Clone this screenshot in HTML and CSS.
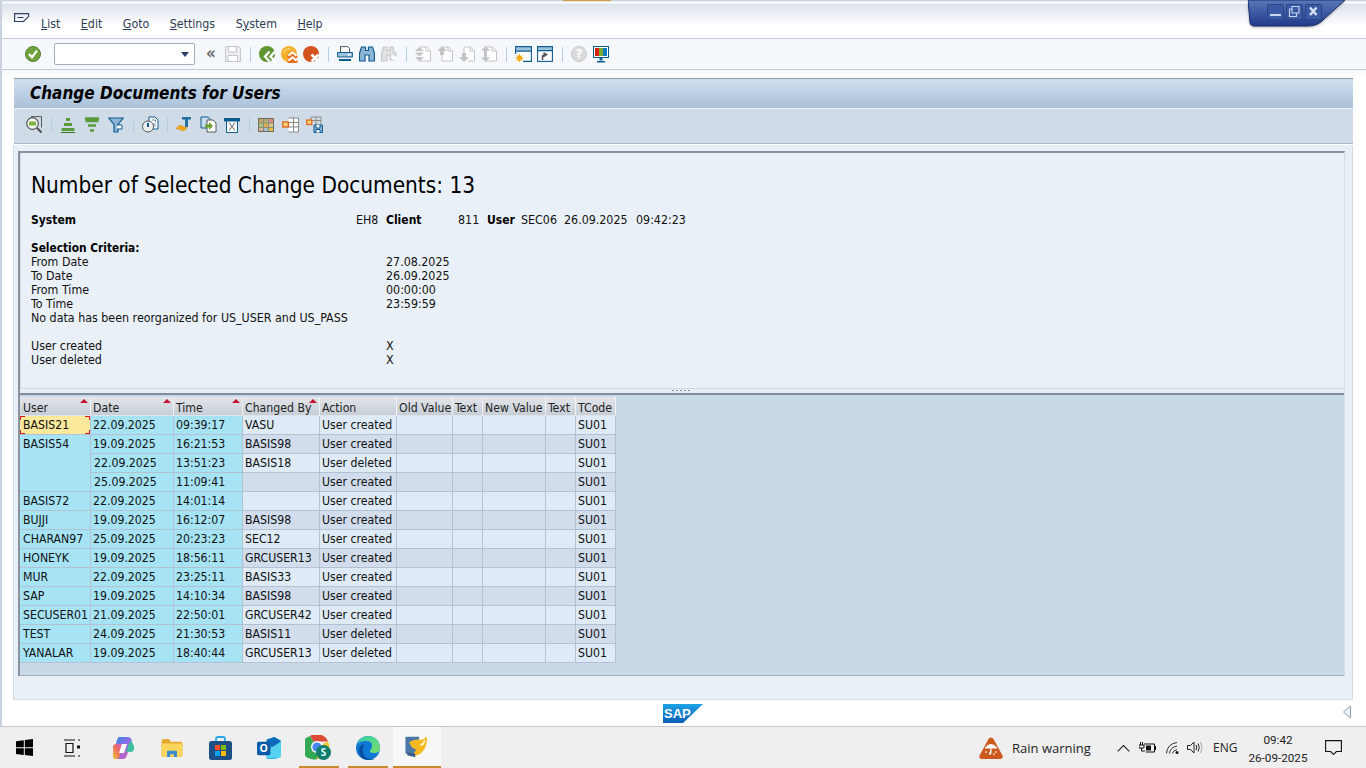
FILE: index.html
```html
<!DOCTYPE html>
<html lang="en">
<head>
  <meta charset="UTF-8">
  <meta name="viewport" content="width=device-width,initial-scale=1.0">
  <title>Change Documents for Users</title>
  <link rel="stylesheet" href="styles.css">
</head>
<body>
  <div class="window">
    <span class="top-accent"></span>

    <!-- window buttons hanging from the top edge -->
    <div class="win-controls">
      <svg width="100" height="28" viewBox="0 0 100 28">
        <defs>
          <linearGradient id="wcBg" x1="0" y1="0" x2="0" y2="1">
            <stop offset="0" stop-color="#5878ba"/>
            <stop offset="1" stop-color="#22398a"/>
          </linearGradient>
        </defs>
        <path d="M0 0 L2 22 Q2 26 7 26 L60 26 Q70 26 76 19 L97 0 Z" fill="url(#wcBg)" stroke="#1b2f6b"/>
        <rect x="19.5" y="4.5" width="16" height="15" rx="1.5" fill="#3a5aa6" stroke="#2a4583"/>
        <rect x="38.5" y="4.5" width="16" height="15" rx="1.5" fill="#3a5aa6" stroke="#2a4583"/>
        <rect x="57.5" y="4.5" width="16" height="15" rx="1.5" fill="#3a5aa6" stroke="#2a4583"/>
        <rect x="22" y="14" width="11" height="2" fill="#c9d6ee"/>
        <path d="M44 9h-2.500v7.500h7V13M44 6.500h7v6.500h-7z" fill="none" stroke="#c9d6ee" stroke-width="1.1"/>
        <path d="M62 7.500l6.500 7.500M68.500 7.500L62 15" stroke="#d9e3f4" stroke-width="2.4"/>
      </svg>
    </div>

    <header class="menubar">
      <svg class="menu-icon" width="16" height="12" viewBox="0 0 16 12"><path d="M.6.6h14v3L9.500 8.500H.6zM3.500 4.500h6" fill="none" stroke="#2e4266" stroke-width="1.2"/></svg>
      <nav class="menu">
        <a href="#"><u>L</u>ist</a>
        <a href="#"><u>E</u>dit</a>
        <a href="#"><u>G</u>oto</a>
        <a href="#"><u>S</u>ettings</a>
        <a href="#">S<u>y</u>stem</a>
        <a href="#"><u>H</u>elp</a>
      </nav>
    </header>

    <div class="sys-toolbar">
      <span class="tb"><svg width="16" height="16" viewBox="0 0 16 16"><circle cx="8" cy="8" r="7.5" fill="#6fa43c" stroke="#55802d"/><path d="M4 8l3 3.200L12 4.600" fill="none" stroke="#fff" stroke-width="2.2"/></svg></span>
      <div class="cmd-box"><span class="cmd-arrow"></span></div>
      <span class="tb tb-chev">«</span>
      <span class="tb"><svg width="16" height="16" viewBox="0 0 16 16"><path d="M.5.5h13l2 2v13H.5z" fill="#eceef0" stroke="#c3c6ca"/><path d="M3.500 1v5h8V1M3 15v-5.500h9.500V15" fill="#fff" stroke="#c3c6ca"/></svg></span>
      <span class="sep"></span>
      <span class="tb"><svg width="17" height="17" viewBox="0 0 17 17"><circle cx="8" cy="8" r="8" fill="#5f9732"/><path d="M10.500 5.500L6 10.500l4.500 5M16 5.500l-4.500 5 4.500 5" fill="none" stroke="#fff" stroke-width="2.3"/></svg></span>
      <span class="tb"><svg width="17" height="17" viewBox="0 0 17 17"><circle cx="8" cy="8" r="8" fill="#f4b02a"/><path d="M3 8a5.500 5.500 0 0 1 7-5" fill="none" stroke="#fbd46a" stroke-width="1.5"/><path d="M6.500 9.500l5-4.500 5 4.500v2.500h-10zM6.500 14.500l5-4.500 5 4.500V17h-10z" fill="#e8701f"/><path d="M7.500 9.800l4-3.500 4 3.500M7.500 14.800l4-3.500 4 3.500" fill="none" stroke="#fff" stroke-width="1.8"/></svg></span>
      <span class="tb"><svg width="17" height="17" viewBox="0 0 17 17"><circle cx="8" cy="8" r="8" fill="#d4531f"/><path d="M8.500 8.500l7 7M15.500 8.500l-7 7" stroke="#fff" stroke-width="2.6"/></svg></span>
      <span class="sep"></span>
      <span class="tb"><svg width="16" height="16" viewBox="0 0 16 16"><path d="M3.500 6V.6h7l2 2V6" fill="#fff" stroke="#4a5561"/><path d="M.6 6.500h14.800v4.500H.6z" fill="#9ec3de" stroke="#0f5b8e"/><rect x="11" y="7.8" width="2.5" height="1.8" fill="#fff"/><path d="M2 13h12v2H2z" fill="#0f5b8e"/></svg></span>
      <span class="tb"><svg width="16" height="16" viewBox="0 0 16 16"><path d="M2.500 1h4v3.500h3V1h4l2 6.500V15h-5.500V9H6v6H.5V7.500z" fill="#8db6d6" stroke="#0f5b8e" stroke-width="1.2"/></svg></span>
      <span class="tb"><svg width="16" height="16" viewBox="0 0 16 16"><path d="M2.500 1h3.500v3.500h3V1h3l1 6H15v3h-2.500v4H9V9H6v6H.5V7.500z" fill="#e2e2e2" stroke="#c6c6c6" stroke-width="1.2"/><path d="M10 11.500h5M12.500 9v5" stroke="#fff" stroke-width="2"/></svg></span>
      <span class="sep"></span>
      <span class="tb"><svg width="16" height="16" viewBox="0 0 16 16"><path d="M4.500 1h7l4 4v10h-11" fill="#fff" stroke="#c4c4c4"/><path d="M11 1v4h4" fill="none" stroke="#c4c4c4"/><path d="M4.500 1L0 5h9zM0 6.500h9L4.500 10.500zM0 11h9l-4.500 4.500z" fill="#c4c4c4"/></svg></span>
      <span class="tb"><svg width="16" height="16" viewBox="0 0 16 16"><path d="M6 1h5.500l4 4v10H5V9" fill="#fff" stroke="#c4c4c4"/><path d="M11 1v4h4" fill="none" stroke="#c4c4c4"/><path d="M5 0L0 5h3v4h4V5h3z" fill="#c4c4c4"/></svg></span>
      <span class="tb"><svg width="16" height="16" viewBox="0 0 16 16"><path d="M5 7V1h6.500l4 4v10H9" fill="#fff" stroke="#c4c4c4"/><path d="M11 1v4h4" fill="none" stroke="#c4c4c4"/><path d="M5 16l-5-5h3V7h4v4h3z" fill="#c4c4c4"/></svg></span>
      <span class="tb"><svg width="16" height="16" viewBox="0 0 16 16"><path d="M4.500 1h7l4 4v10h-11" fill="#fff" stroke="#c4c4c4"/><path d="M11 1v4h4" fill="none" stroke="#c4c4c4"/><path d="M4.500 0L0 4.500h9zM3 4.500h3v7H3zM4.500 16L0 11.500h9z" fill="#c4c4c4"/></svg></span>
      <span class="sep"></span>
      <span class="tb"><svg width="17" height="16" viewBox="0 0 17 16"><path d="M.6.6h15.800v14.800H8" fill="#fff" stroke="#0f5b8e" stroke-width="1.1"/><path d="M.6.6h15.800v4.500H.6zM.6 5v3" fill="#9ec3de" stroke="#0f5b8e" stroke-width="1.1"/><path d="M4.500 8v8M.5 12h8M1.700 9.200l5.600 5.600M7.300 9.200l-5.600 5.600" stroke="#f7a90f"/><circle cx="4.5" cy="12" r="2.6" fill="#f7a90f"/></svg></span>
      <span class="tb"><svg width="16" height="16" viewBox="0 0 16 16"><rect x=".6" y=".6" width="14.8" height="14.8" fill="#fff" stroke="#0f5b8e" stroke-width="1.1"/><path d="M.6.6h14.800v4H.6z" fill="#9ec3de" stroke="#0f5b8e" stroke-width="1.1"/><path d="M5.500 14v-3q0-2.500 3-2.500M6.500 7l3 1.500-3 2" fill="none" stroke="#555" stroke-width="1.6"/></svg></span>
      <span class="sep"></span>
      <span class="tb"><svg width="16" height="16" viewBox="0 0 16 16"><circle cx="8" cy="8" r="7.5" fill="#dcdcdc" stroke="#c6c6c6"/><text x="8" y="12" class="help-q">?</text></svg></span>
      <span class="tb"><svg width="16" height="17" viewBox="0 0 16 17"><rect x=".5" y=".5" width="15" height="11" fill="#fff" stroke="#0f5b8e"/><rect x="2" y="2" width="4" height="8" fill="#d81f10"/><rect x="6" y="2" width="4" height="8" fill="#7aaa2e"/><rect x="10" y="2" width="4" height="8" fill="#0f7cc0"/><path d="M6.500 12h3v2.500h-3zM4 15h8v1.500H4z" fill="#0f5b8e"/></svg></span>
    </div>

    <main class="page">
      <div class="title-bar"><h1>Change Documents for Users</h1></div>
      <div class="app-toolbar">
        <span class="tb2"><svg width="17" height="17" viewBox="0 0 17 17"><path d="M5 .6h10.500v11" fill="none" stroke="#555"/><circle cx="6.5" cy="7.5" r="5.8" fill="#f5f5f5" stroke="#555" stroke-width="1.2"/><rect x="3" y="5.5" width="7" height="4" fill="#7cb342"/><path d="M11 12l4.500 4.500" stroke="#555" stroke-width="2.2"/></svg></span>
        <span class="sep"></span>
        <span class="tb2"><svg width="16" height="16" viewBox="0 0 16 16"><path d="M6 2.500h4M4 7.500h8M1.500 12.500h13" stroke="#5a9a3a" stroke-width="3" fill="none"/><path d="M1 15.500h14" stroke="#2f7a2a"/></svg></span>
        <span class="tb2"><svg width="16" height="16" viewBox="0 0 16 16"><path d="M1 1.500h14M1.500 4h13M4 8.500h8M6 13.500h4" stroke="#5a9a3a" stroke-width="2.4" fill="none"/></svg></span>
        <span class="tb2"><svg width="16" height="16" viewBox="0 0 16 16"><path d="M.8 1h14.400L10 7.500V15H6V7.500z" fill="#8db6d6" stroke="#0f5b8e" stroke-width="1.2"/><path d="M9 8h5v4H9" fill="#fff" stroke="#0f5b8e"/></svg></span>
        <span class="sep"></span>
        <span class="tb2"><svg width="17" height="17" viewBox="0 0 17 17"><path d="M7 5V1h6l3 3v9h-5" fill="#fff" stroke="#0f5b8e"/><path d="M9.500 4h4v2M11 8h3M11 10h3" stroke="#6a8fb0" fill="none"/><circle cx="6" cy="10.5" r="5.5" fill="#eee" stroke="#555"/><path d="M6 7v4" stroke="#0f5b8e" stroke-width="2"/></svg></span>
        <span class="sep"></span>
        <span class="tb2"><svg width="18" height="17" viewBox="0 0 18 17"><path d="M1 13q3-5 6-3t5 1l-1 2q-2 3-5 1t-5-1z" fill="#f5a90f" stroke="#d48a08" stroke-width=".6"/><path d="M7 1h9v2.500h-3V11H10V3.500H7z" fill="#1f6f9f"/></svg></span>
        <span class="tb2"><svg width="17" height="17" viewBox="0 0 17 17"><path d="M1 1h7l2 2v9H1z" fill="#c7dcec" stroke="#0f5b8e"/><path d="M7 4h6l3 3v9H7z" fill="#fff" stroke="#555"/><path d="M5 8.500h4V6l4 4-4 4v-2.500H5z" fill="#6aa230"/></svg></span>
        <span class="tb2"><svg width="16" height="16" viewBox="0 0 16 16"><path d="M0 1h16v3.500H0z" fill="#0f5b8e"/><path d="M2.500 4h11v11.500h-11z" fill="#fff" stroke="#0f5b8e"/><path d="M5 5.500l6 8M11 5.500l-6 8" stroke="#666"/></svg></span>
        <span class="sep"></span>
        <span class="tb2"><svg width="16" height="16" viewBox="0 0 16 16"><rect x=".5" y="1.5" width="15" height="13" fill="#8c8c7c" stroke="#6e6e60"/><path d="M1 2h4v3.500H1z" fill="#c8a468"/><path d="M6 2h4v3.500H6z" fill="#b2b07a"/><path d="M11 2h4v3.500h-4z" fill="#d88"/><path d="M1 6.500h4V10H1z" fill="#a7c27a"/><path d="M6 6.500h4V10H6z" fill="#e0b050"/><path d="M11 6.500h4V10h-4z" fill="#d7c98c"/><path d="M1 11h4v3H1z" fill="#d7b5a0"/><path d="M6 11h4v3H6z" fill="#a2bfd6"/><path d="M11 11h4v3h-4z" fill="#e8c24c"/></svg></span>
        <span class="tb2"><svg width="17" height="16" viewBox="0 0 17 16"><path d="M6.500 1h10v14h-10M11.500 1v14M6.500 5.500h10M6.500 10h10" fill="#fff" stroke="#8a8a8a"/><rect x=".8" y="5" width="5.5" height="5" fill="#f7d77a" stroke="#e0661c" stroke-width="1.4"/></svg></span>
        <span class="tb2"><svg width="17" height="17" viewBox="0 0 17 17"><path d="M5 1h10v9M10 1v8M5 4.500h10M5 1v3" fill="none" stroke="#8a8a8a"/><rect x=".8" y="4" width="5" height="4.5" fill="#f7d77a" stroke="#e0661c" stroke-width="1.3"/><path d="M8 9h8.500v7.500H8z" fill="#8db6d6" stroke="#0f5b8e"/><path d="M10 9v3h4V9M10 16.500v-3h4v3" fill="#fff" stroke="#0f5b8e"/></svg></span>
      </div>

      <div class="content">
        <div class="frame">
          <section class="doc-header">
            <h2>Number of Selected Change Documents: 13</h2>
            <div class="sys-line">
              <b class="w-sys">System</b><span class="w-eh">EH8</span><b class="w-cli">Client</b><span class="w-811">811</span><b class="w-user">User</b><span class="w-sec">SEC06</span><span class="w-date">26.09.2025</span><span>09:42:23</span>
            </div>
            <h3>Selection Criteria:</h3>
            <div class="crit"><span>From Date</span><span>27.08.2025</span></div>
            <div class="crit"><span>To Date</span><span>26.09.2025</span></div>
            <div class="crit"><span>From Time</span><span>00:00:00</span></div>
            <div class="crit"><span>To Time</span><span>23:59:59</span></div>
            <div class="crit-note">No data has been reorganized for US_USER and US_PASS</div>
            <div class="crit"><span>User created</span><span>X</span></div>
            <div class="crit"><span>User deleted</span><span>X</span></div>
          </section>
          <div class="sash"><span class="sash-grip"></span></div>
          <section class="grid-area">
            <table class="alv">
              <colgroup>
                <col class="c-user"><col class="c-date"><col class="c-time"><col class="c-by"><col class="c-action"><col class="c-old"><col class="c-text"><col class="c-new"><col class="c-text"><col class="c-tcode">
              </colgroup>
              <thead>
                <tr>
                  <th class="sorted">User</th><th class="sorted">Date</th><th class="sorted">Time</th><th class="sorted">Changed By</th><th>Action</th><th>Old Value</th><th>Text</th><th>New Value</th><th>Text</th><th>TCode</th>
                </tr>
              </thead>
              <tbody>
                <tr><td class="key hot"><i class="cn tl"></i><i class="cn tr"></i><i class="cn bl"></i><i class="cn br"></i>BASIS21</td><td class="key">22.09.2025</td><td class="key">09:39:17</td><td>VASU</td><td>User created</td><td></td><td></td><td></td><td></td><td>SU01</td></tr>
                <tr><td class="key" rowspan="3">BASIS54</td><td class="key">19.09.2025</td><td class="key">16:21:53</td><td>BASIS98</td><td>User created</td><td></td><td></td><td></td><td></td><td>SU01</td></tr>
                <tr><td class="key">22.09.2025</td><td class="key">13:51:23</td><td>BASIS18</td><td>User deleted</td><td></td><td></td><td></td><td></td><td>SU01</td></tr>
                <tr><td class="key">25.09.2025</td><td class="key">11:09:41</td><td></td><td>User created</td><td></td><td></td><td></td><td></td><td>SU01</td></tr>
                <tr><td class="key">BASIS72</td><td class="key">22.09.2025</td><td class="key">14:01:14</td><td></td><td>User created</td><td></td><td></td><td></td><td></td><td>SU01</td></tr>
                <tr><td class="key">BUJJI</td><td class="key">19.09.2025</td><td class="key">16:12:07</td><td>BASIS98</td><td>User created</td><td></td><td></td><td></td><td></td><td>SU01</td></tr>
                <tr><td class="key">CHARAN97</td><td class="key">25.09.2025</td><td class="key">20:23:23</td><td>SEC12</td><td>User created</td><td></td><td></td><td></td><td></td><td>SU01</td></tr>
                <tr><td class="key">HONEYK</td><td class="key">19.09.2025</td><td class="key">18:56:11</td><td>GRCUSER13</td><td>User created</td><td></td><td></td><td></td><td></td><td>SU01</td></tr>
                <tr><td class="key">MUR</td><td class="key">22.09.2025</td><td class="key">23:25:11</td><td>BASIS33</td><td>User created</td><td></td><td></td><td></td><td></td><td>SU01</td></tr>
                <tr><td class="key">SAP</td><td class="key">19.09.2025</td><td class="key">14:10:34</td><td>BASIS98</td><td>User created</td><td></td><td></td><td></td><td></td><td>SU01</td></tr>
                <tr><td class="key">SECUSER01</td><td class="key">21.09.2025</td><td class="key">22:50:01</td><td>GRCUSER42</td><td>User created</td><td></td><td></td><td></td><td></td><td>SU01</td></tr>
                <tr><td class="key">TEST</td><td class="key">24.09.2025</td><td class="key">21:30:53</td><td>BASIS11</td><td>User deleted</td><td></td><td></td><td></td><td></td><td>SU01</td></tr>
                <tr><td class="key">YANALAR</td><td class="key">19.09.2025</td><td class="key">18:40:44</td><td>GRCUSER13</td><td>User deleted</td><td></td><td></td><td></td><td></td><td>SU01</td></tr>
              </tbody>
            </table>
          </section>
        </div>
      </div>

      <footer class="status-bar">
        <svg class="sap-logo" width="40" height="19" viewBox="0 0 40 19">
          <defs>
            <linearGradient id="sapBg" x1="0" y1="0" x2="0" y2="1">
              <stop offset="0" stop-color="#1ea2e6"/>
              <stop offset="1" stop-color="#0a5fb4"/>
            </linearGradient>
          </defs>
          <path d="M0 0h40L20 19H0z" fill="url(#sapBg)"/>
          <text x="1" y="14" class="sap-text">SAP</text>
        </svg>
        <svg class="status-grip" width="10" height="14" viewBox="0 0 10 14"><path d="M8.500 1v12L1.500 7z" fill="#eef2f6" stroke="#8ea2b5"/></svg>
      </footer>
    </main>
  </div>

  <footer class="taskbar">
    <div class="task-left">
      <span class="tk tk-start"><svg width="17" height="17" viewBox="0 0 17 17"><path d="M0 2.300l7.800-1.100v7H0zM8.800 1l8.200-1v8.200H8.800zM0 9.200h7.800v6.900L0 15zM8.800 9.200H17V17l-8.200-1.100z" fill="#000"/></svg></span>
      <span class="tk tk-view"><svg width="18" height="18" viewBox="0 0 18 18"><path d="M1 1h11M1 17h11M3 4.500h7v9H3zM15 1h2M15 17h2" fill="none" stroke="#111" stroke-width="1.2"/><rect x="14" y="6.500" width="3" height="3" fill="#111"/></svg></span>
      <span class="tk tk-copilot"><svg width="24" height="22" viewBox="0 0 24 22"><defs><linearGradient id="cpA" x1="0" y1="0" x2="1" y2="1"><stop offset="0" stop-color="#1d8fe0"/><stop offset=".5" stop-color="#8f6be8"/><stop offset="1" stop-color="#e85aa8"/></linearGradient><linearGradient id="cpB" x1="0" y1="1" x2="1" y2="0"><stop offset="0" stop-color="#f6c93a"/><stop offset=".5" stop-color="#ee6f5a"/><stop offset="1" stop-color="#c75ad8"/></linearGradient></defs><path d="M8 0h9q3 0 4 4l-5 14q-1 4-4 4H6q-5 0-4-5L6 3q1-3 2-3z" fill="url(#cpA)"/><path d="M2 10q0-3 4-3h6l-3 11q-1 4-4 4-4 0-3-5z" fill="url(#cpB)"/><path d="M11 7h5l-3 9H8z" fill="#fff"/><path d="M20 3l3 6q1 6-4 6h-4l2-6z" fill="#3cc0a0"/></svg></span>
      <span class="tk tk-folder"><svg width="22" height="18" viewBox="0 0 23 20"><path d="M0 2q0-2 2-2h6l2 3h11q2 0 2 2v13q0 2-2 2H2q-2 0-2-2z" fill="#e5a92f"/><path d="M0 5h23v13q0 2-2 2H2q-2 0-2-2z" fill="#fbd65c"/><path d="M6 20v-6q0-1 1-1h9q1 0 1 1v6h-3.500v-3h-4v3z" fill="#3a8bd0"/></svg></span>
      <span class="tk tk-store"><svg width="23" height="24" viewBox="0 0 23 24"><path d="M7 6V3q0-2 2-2h5q2 0 2 2v3" fill="none" stroke="#2aa8e8" stroke-width="1.8"/><rect y="5" width="23" height="19" rx="2.5" fill="#1c4f86"/><rect x="6" y="9" width="5" height="5" fill="#f25022"/><rect x="12" y="9" width="5" height="5" fill="#7fba00"/><rect x="6" y="15" width="5" height="5" fill="#00a4ef"/><rect x="12" y="15" width="5" height="5" fill="#ffb900"/></svg></span>
      <span class="tk tk-outlook"><svg width="24" height="22" viewBox="0 0 25 23"><path d="M10 3l8-3 7 4v15l-5 4H10z" fill="#30b4ec"/><path d="M10 3l8-3 7 4-8 7-7-4z" fill="#0f6cbd"/><path d="M10 14l15-9v14q0 3-3 3H10z" fill="#54d2f0"/><rect y="5" width="14" height="14" rx="1.5" fill="#0a5aa8"/><text x="7" y="16" class="ol-o">O</text></svg></span>
      <span class="tk tk-chrome"><svg width="28" height="26" viewBox="0 0 28 26"><path d="M12 12L5 1A12 12 0 0 1 23 6.500H12z" fill="#de4a38"/><path d="M12 12L23 6.500A12 12 0 0 1 12 24z" fill="#f5c431"/><path d="M12 12v12A12 12 0 0 1 5 1z" fill="#35a853"/><circle cx="12" cy="12" r="6" fill="#fff"/><circle cx="12" cy="12" r="4.6" fill="#4788ef"/><circle cx="18.5" cy="17.5" r="7.5" fill="#107c6c"/><text x="18.5" y="21" class="ch-s">S</text></svg></span>
      <span class="tk tk-edge"><svg width="24" height="24" viewBox="0 0 24 24"><defs><linearGradient id="edA" x1="0" y1="0" x2="1" y2="1"><stop offset="0" stop-color="#2ecbb0"/><stop offset="1" stop-color="#7be065"/></linearGradient></defs><circle cx="12" cy="12" r="12" fill="#0f78d4"/><path d="M1 9Q4 0 12 0q11 0 12 12 0 5-6 5-5 0-4-3 2-1 2-4 0-5-6-5-7 0-9 4z" fill="url(#edA)"/><path d="M11 24q-9-2-8-11 1-4 6-5-3 3-2 8 1 6 7 7 3 1 6-1-4 3-9 2z" fill="#0a4f9e"/></svg></span>
      <span class="tk tk-sap"><svg width="26" height="25" viewBox="0 0 27 27"><path d="M1 2l15 0-3 20-12-2z" fill="#4a77a8"/><path d="M5 8q4-4 14-3l5-3q1 8-3 14t-9 6l-2-3 3-3q-5-1-8-8z" fill="#f5b81f"/><path d="M22 4q1 5-3 8l-3-1q4-2 6-7z" fill="#fff3c4"/><path d="M3 19l8 1 1 4-9-2z" fill="#3a5b84"/></svg></span>
    </div>
    <div class="task-right">
      <span class="weather"><svg width="24" height="22" viewBox="0 0 24 22"><path d="M12 .5q1.500 0 2.500 1.500l9 16.500q1 3-2 3.500H2.500q-3-.5-2-3.500l9-16.500Q10.500.5 12 .5z" fill="#cc5a1e"/><path d="M6 11q6-7 12 0zM12 11v5q0 2-2 1" fill="#fff" stroke="#fff"/><path d="M7 14v2M17 14v2M15 16v2" stroke="#fff"/></svg></span>
      <span class="weather-text">Rain warning</span>
      <span class="tray tray-up"><svg width="13" height="8" viewBox="0 0 13 8"><path d="M.7 7.300L6.500 1.500l5.800 5.800" fill="none" stroke="#222" stroke-width="1.1"/></svg></span>
      <span class="tray tray-bat"><svg width="17" height="11" viewBox="0 0 17 11"><path d="M0 3h5V6H0zM1.500 0v3M3.500 0v3M2.500 6v3H6" fill="none" stroke="#111"/><path d="M5 2h10.500v8H7" fill="none" stroke="#111"/><rect x="7" y="3.5" width="5" height="5" fill="#111"/><rect x="15.5" y="4" width="1.5" height="4" fill="#111"/></svg></span>
      <span class="tray tray-wifi"><svg width="14" height="12" viewBox="0 0 14 12"><path d="M.5 11.500Q1 2 11 .5M3.500 11.500Q4 5.500 11 4M6.500 11.500Q7 8.500 11 7.500" fill="none" stroke="#333"/><circle cx="11" cy="10.5" r="1.5" fill="#111"/></svg></span>
      <span class="tray tray-vol"><svg width="16" height="13" viewBox="0 0 16 13"><path d="M.5 4.500h3L7 1v11L3.500 8.500h-3z" fill="none" stroke="#222"/><path d="M9 4q1.500 2.500 0 5M11 2.500q2.500 4 0 8" fill="none" stroke="#222"/><path d="M13.500 1q3 5.500 0 11" fill="none" stroke="#aaa"/></svg></span>
      <span class="lang">ENG</span>
      <span class="clock"><span>09:42</span><span>26-09-2025</span></span>
      <span class="notify"><svg width="17" height="15" viewBox="0 0 17 15"><path d="M.6.6h15.800v10.900h-5L8.500 14.400 5.600 11.500h-5z" fill="none" stroke="#111" stroke-width="1.1"/></svg></span>
    </div>
  </footer>
</body>
</html>
```

FILE: styles.css
```css
* { box-sizing: border-box; }
html, body { height: 100%; }
body {
  margin: 0;
  height: 768px;
  overflow: hidden;
  display: flex;
  flex-direction: column;
  background: #fff;
  color: #111;
  font-family: "DejaVu Sans", "Liberation Sans", sans-serif;
  font-stretch: condensed;
  font-size: 12px;
}

/* window chrome */
.window {
  position: relative;
  height: 727px;
  flex: none;
  display: flex;
  flex-direction: column;
  background: #fff;
  border-left: 2px solid #c9d2de;
  border-bottom: 1px solid #c6c6c6;
}
.top-accent {
  position: absolute;
  left: 561px; top: 0;
  width: 48px; height: 1px;
  background: #d19a3e;
}
.win-controls {
  position: absolute;
  left: 1246px; top: 0;
  height: 28px;
  filter: drop-shadow(0 1px 1px #0005);
}
.menubar {
  height: 39px;
  flex: none;
  display: flex;
  align-items: center;
  padding: 6px 0 0 12px;
  background: linear-gradient(#c9d2df 0, #c9d2df 1px, #fff 2px, #fff 3px, #dde3ec 4px, #fff 26px);
  border-bottom: 1px solid #c5cbd6;
}
.menu-icon { margin: -7px 0 0 0; }
.menu { display: flex; margin-left: 11px; padding-top: 3px; font-size: 12.3px; }
.menu a {
  color: #2e3c55;
  text-decoration: none;
  margin-right: 20.5px;
}
.menu u { text-underline-offset: 1px; }

.sys-toolbar {
  height: 31px;
  flex: none;
  display: flex;
  align-items: center;
  padding-left: 20px;
  background: #f5f8fc;
  border-bottom: 1px solid #c5cbd6;
}
.tb, .tb2 {
  flex: none;
  height: 22px;
  display: flex;
  align-items: center;
  justify-content: center;
}
.tb { width: 22px; }
.tb2 { width: 24px; }
.tb-chev { color: #666; font-size: 17px; font-weight: 700; padding-bottom: 3px; }
.sep {
  flex: none;
  width: 12px;
  height: 15px;
  display: flex;
  justify-content: center;
}
.sep::before { content: ""; width: 1px; background: #b5cde2; }
.app-toolbar .sep { width: 10px; }
.cmd-box {
  position: relative;
  flex: none;
  width: 141px; height: 22px;
  margin-left: 10px;
  margin-right: 5px;
  background: #fff;
  border: 1px solid #a7adb6;
  border-radius: 2px;
}
.cmd-arrow {
  position: absolute;
  right: 5px; top: 8px;
  border-left: 4.5px solid transparent;
  border-right: 4.5px solid transparent;
  border-top: 5px solid #2b3f66;
}
.help-q {
  font: 700 12px "DejaVu Sans", sans-serif;
  text-anchor: middle;
  fill: #fff;
}

/* page body */
.page {
  flex: 1;
  min-height: 0;
  display: flex;
  flex-direction: column;
  padding-top: 8px;
  background: linear-gradient(#f6f8fc, #fff 10px);
}
.title-bar {
  height: 31px;
  flex: none;
  margin: 0 13px 0 12px;
  padding: 0 0 2px 16px;
  display: flex;
  align-items: center;
  background: linear-gradient(#cfdfee, #aac1d9);
  border-top: 1px solid #8b9db0;
  border-bottom: 1px solid #eef3f8;
}
.title-bar h1 {
  margin: 0;
  font-size: 17px;
  font-weight: 700;
  font-style: italic;
  color: #000;
}
.app-toolbar {
  height: 35px;
  flex: none;
  margin: 0 13px 0 12px;
  padding: 0 0 3px 8px;
  display: flex;
  align-items: center;
  background: #cfdce8;
  border-bottom: 1px solid #aab8c6;
}
.content {
  flex: 1;
  min-height: 0;
  margin: 1px 13px 0 11px;
  padding: 6px 7px 23px 4px;
  background: #e9eff6;
  border: 1px solid #d5dbe3;
  border-top: 0;
}
.frame {
  height: 100%;
  display: flex;
  flex-direction: column;
  border: 2px solid #8a949e;
  border-right: 1px solid #d5dde6;
  border-bottom: 1px solid #a2aebb;
}
.doc-header {
  height: 236px;
  flex: none;
  padding: 17px 0 0 10px;
  font-size: 12.35px;
  line-height: 14px;
  border-left: 1px solid #cfd6de;
  border-bottom: 1px solid #cfd6de;
  background: #eaf0f7;
}
.doc-header h2 {
  margin: 0 0 13px;
  font-size: 22.4px;
  line-height: 30px;
  font-weight: 400;
  color: #000;
}
.doc-header h3 {
  margin: 0;
  font-size: 11.8px;
  font-weight: 700;
  color: #000;
}
.sys-line { display: flex; margin-bottom: 14px; }
.sys-line b { color: #000; font-size: 12px; }
.w-sys { width: 325px; }
.w-eh { width: 30px; }
.w-cli { width: 72px; }
.w-811 { width: 29px; }
.w-user { width: 34px; }
.w-sec { width: 43px; }
.w-date { width: 72px; }
.crit { display: grid; grid-template-columns: 355px 1fr; }
.crit-note { margin-bottom: 14px; }

.sash {
  height: 6px;
  flex: none;
  display: flex;
  justify-content: center;
  background: #e9eff6;
  border-bottom: 2px solid #7f8b98;
}
.sash-grip {
  width: 20px;
  height: 1px;
  margin-top: 1px;
  background: repeating-linear-gradient(90deg, #7f8b98 0 2px, transparent 2px 4px);
}
.grid-area {
  flex: 1;
  min-height: 0;
  padding: 2px 0 0 0;
  background: #c9d9e8;
}

/* the list */
.alv {
  table-layout: fixed;
  width: 596px;
  border-collapse: separate;
  border-spacing: 0;
  font-size: 12.2px;
  line-height: 14px;
}
.c-user { width: 71px; }
.c-date { width: 83px; }
.c-time { width: 69px; }
.c-by { width: 77px; }
.c-action { width: 77px; }
.c-old { width: 56px; }
.c-text { width: 30px; }
.c-new { width: 63px; }
.c-tcode { width: 40px; }
.alv th {
  position: relative;
  height: 19px;
  padding: 3px 0 0 2px;
  text-align: left;
  font-weight: 400;
  white-space: nowrap;
  overflow: hidden;
  color: #222;
  background: linear-gradient(#e3e6ea, #c7ced7);
  border-right: 1px solid #f0f2f5;
  border-bottom: 1px solid #dfe4ea;
}
.alv th:first-child { padding-left: 3px; }
.alv th.sorted::after {
  content: "";
  position: absolute;
  right: 2px; top: 2px;
  border-left: 4px solid transparent;
  border-right: 4px solid transparent;
  border-bottom: 4px solid #c4112f;
}
.alv td {
  position: relative;
  height: 19px;
  padding: 0 0 1px 2px;
  vertical-align: middle;
  white-space: nowrap;
  background: #deeaf5;
  border-right: 1px solid #b4c1d1;
  border-bottom: 1px solid #b4c1d1;
}
.alv tbody tr:nth-child(even) td { background: #d1dded; }
.alv td.key, .alv tbody tr:nth-child(even) td.key { background: #a6e3f5; }
.alv td[rowspan] { vertical-align: top; padding-top: 2px; padding-left: 3px; }
.alv td:first-child { padding-left: 3px; }
.alv td.hot { background: #fde99c; }
.cn { position: absolute; width: 5px; height: 4px; border: 0 solid #e01b24; }
.tl { left: 0; top: 0; border-width: 1px 0 0 1px; }
.tr { right: 0; top: 0; border-width: 1px 1px 0 0; }
.bl { left: 0; bottom: 0; border-width: 0 0 1px 1px; }
.br { right: 0; bottom: 0; border-width: 0 1px 1px 0; }

.status-bar {
  position: relative;
  height: 26px;
  flex: none;
  display: flex;
  justify-content: center;
  align-items: center;
  padding-right: 3px;
}
.sap-text {
  font: 700 13px "Liberation Sans", sans-serif;
  fill: #fff;
}
.status-grip { position: absolute; right: 14px; top: 5px; }

/* windows taskbar */
.taskbar {
  height: 41px;
  flex: none;
  display: flex;
  justify-content: space-between;
  background: #efefef;
  font-family: "Open Sans", "Noto Sans", sans-serif;
  font-stretch: normal;
  color: #222;
}
.task-left { display: flex; height: 100%; }
.tk {
  position: relative;
  flex: none;
  width: 48px;
  height: 100%;
  display: flex;
  align-items: center;
  justify-content: center;
}
.tk-view { width: 47px; }
.tk-copilot { margin-left: 4px; }
.tk-folder { margin-left: 1px; }
.tk-outlook { margin-left: 1px; }
.tk-chrome { margin-left: 2px; }
.tk-edge { margin-left: 1px; }
.tk-sap { margin-left: 1px; background: #f8f8f8; }
.tk-chrome::after, .tk-edge::after, .tk-sap::after {
  content: "";
  position: absolute;
  left: 4px; right: 4px; bottom: 0;
  height: 2px;
  background: #c98b2c;
}
.tk-sap::after { left: 0; right: 0; }
.ol-o { font: 700 11px "Open Sans", sans-serif; text-anchor: middle; fill: #fff; }
.ch-s { font: 700 10px "Open Sans", sans-serif; text-anchor: middle; fill: #dff; }

.task-right { display: flex; align-items: center; padding-right: 24px; }
.weather { display: flex; margin-right: 9px; }
.weather-text { width: 105px; font-size: 13px; }
.tray { display: flex; justify-content: center; }
.tray-up { width: 13px; }
.tray-bat { width: 17px; margin-left: 9px; }
.tray-wifi { width: 14px; margin-left: 10px; }
.tray-vol { width: 16px; margin-left: 7px; }
.lang { margin-left: 10px; width: 33px; font-size: 12px; }
.clock {
  display: flex;
  flex-direction: column;
  align-items: center;
  width: 64px;
  font-family: Roboto, sans-serif;
  font-size: 11.7px;
  line-height: 18px;
  margin-top: 2px;
  white-space: nowrap;
}
.notify { display: flex; margin-left: 15px; }
```
